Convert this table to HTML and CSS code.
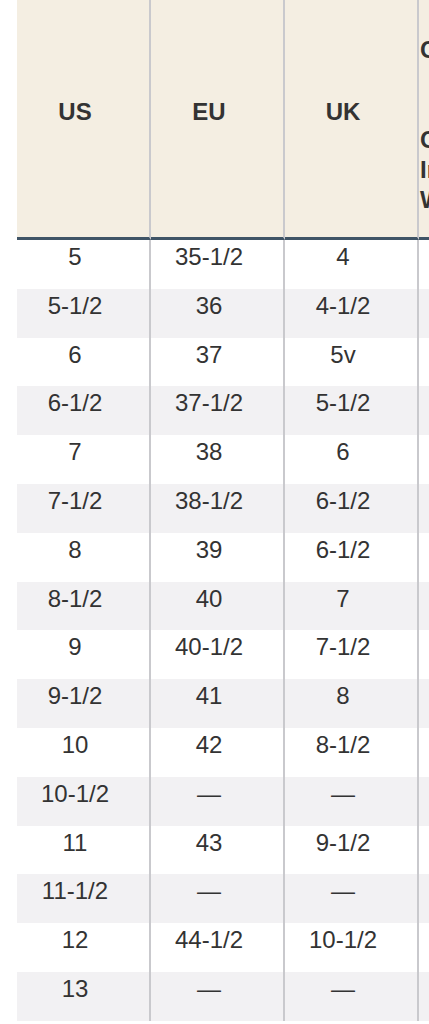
FILE: index.html
```html
<!DOCTYPE html>
<html lang="en">
<head>
<meta charset="utf-8">
<title>Size chart</title>
<link rel="stylesheet" href="styles.css">
</head>
<body>
<div class="sheet">
<table class="sizes">
<colgroup><col class="c"><col class="c"><col class="c"><col class="c"></colgroup>
<thead>
<tr>
<th>US</th><th>EU</th><th>UK</th><th class="extra">Cm<br><br><br>Calf<br>In.<br>Width</th>
</tr>
</thead>
<tbody>
<tr><td>5</td><td>35-1/2</td><td>4</td><td></td></tr>
<tr><td>5-1/2</td><td>36</td><td>4-1/2</td><td></td></tr>
<tr><td>6</td><td>37</td><td>5v</td><td></td></tr>
<tr><td>6-1/2</td><td>37-1/2</td><td>5-1/2</td><td></td></tr>
<tr><td>7</td><td>38</td><td>6</td><td></td></tr>
<tr><td>7-1/2</td><td>38-1/2</td><td>6-1/2</td><td></td></tr>
<tr><td>8</td><td>39</td><td>6-1/2</td><td></td></tr>
<tr><td>8-1/2</td><td>40</td><td>7</td><td></td></tr>
<tr><td>9</td><td>40-1/2</td><td>7-1/2</td><td></td></tr>
<tr><td>9-1/2</td><td>41</td><td>8</td><td></td></tr>
<tr><td>10</td><td>42</td><td>8-1/2</td><td></td></tr>
<tr><td>10-1/2</td><td>—</td><td>—</td><td></td></tr>
<tr><td>11</td><td>43</td><td>9-1/2</td><td></td></tr>
<tr><td>11-1/2</td><td>—</td><td>—</td><td></td></tr>
<tr><td>12</td><td>44-1/2</td><td>10-1/2</td><td></td></tr>
<tr><td>13</td><td>—</td><td>—</td><td></td></tr>
</tbody>
</table>
</div>
</body>
</html>
```
FILE: styles.css
```css
html, body {
  margin: 0;
  padding: 0;
  background: #ffffff;
}
.sheet {
  width: 429px;
  height: 1024px;
  overflow: hidden;
  padding-left: 17px;
  box-sizing: border-box;
}
.sizes {
  border-collapse: separate;
  border-spacing: 0;
  table-layout: fixed;
  width: 536px;
  font-family: "Liberation Sans", Arial, sans-serif;
  font-size: 24px;
  color: #333333;
}
.sizes col.c {
  width: 134px;
}
.sizes th,
.sizes td {
  box-sizing: border-box;
  border-right: 2px solid #c9c9cd;
  text-align: center;
  vertical-align: top;
  padding: 0 16px 0 0;
  overflow: hidden;
  white-space: nowrap;
}
.sizes thead th {
  height: 240px;
  background: #f4eee2;
  border-bottom: 3px solid #3f5466;
  font-weight: bold;
  line-height: 30px;
  padding-top: 97px;
  color: #333333;
}
.sizes thead th.extra {
  text-align: left;
  padding-top: 35px;
  padding-left: 1px;
  padding-right: 0;
}
.sizes tbody td {
  height: 48.8px;
  line-height: 27px;
  padding-top: 3px;
}
.sizes tbody tr:nth-child(even) td {
  background: #f2f1f3;
}
```
